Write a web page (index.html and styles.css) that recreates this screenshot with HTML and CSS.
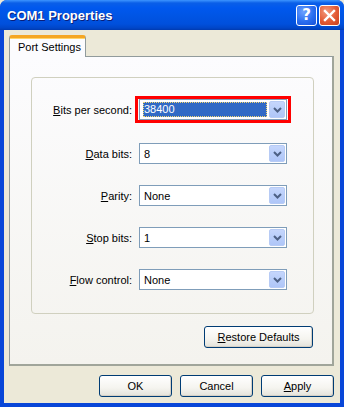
FILE: index.html
```html
<!DOCTYPE html>
<html>
<head>
<meta charset="utf-8">
<link rel="stylesheet" href="styles.css">
</head>
<body>
<div class="window">
  <div class="titlebar">
    <span class="title">COM1 Properties</span>
    <div class="tbtns">
      <div class="tbtn help">?</div>
      <div class="tbtn close">
        <svg width="13" height="13" viewBox="0 0 13 13"><path d="M2 2 L11 11 M11 2 L2 11" stroke="#fff" stroke-width="2.4" stroke-linecap="square"/></svg>
      </div>
    </div>
  </div>
  <div class="client">
    <div class="tabs">
      <div class="tab">Port Settings</div>
    </div>
    <div class="panel">
      <div class="group">
        <div class="row first">
          <label class="lbl"><u>B</u>its per second:</label>
          <div class="combo focus">
            <span class="sel">38400</span>
            <span class="arrow"><svg width="9" height="6" viewBox="0 0 9 6"><path d="M1 1 L4.5 4.5 L8 1" fill="none" stroke="#4D6185" stroke-width="2"/></svg></span>
            <div class="redbox"></div>
          </div>
        </div>
        <div class="row">
          <label class="lbl"><u>D</u>ata bits:</label>
          <div class="combo"><span class="val">8</span><span class="arrow"><svg width="9" height="6" viewBox="0 0 9 6"><path d="M1 1 L4.5 4.5 L8 1" fill="none" stroke="#4D6185" stroke-width="2"/></svg></span></div>
        </div>
        <div class="row">
          <label class="lbl"><u>P</u>arity:</label>
          <div class="combo"><span class="val">None</span><span class="arrow"><svg width="9" height="6" viewBox="0 0 9 6"><path d="M1 1 L4.5 4.5 L8 1" fill="none" stroke="#4D6185" stroke-width="2"/></svg></span></div>
        </div>
        <div class="row">
          <label class="lbl"><u>S</u>top bits:</label>
          <div class="combo"><span class="val">1</span><span class="arrow"><svg width="9" height="6" viewBox="0 0 9 6"><path d="M1 1 L4.5 4.5 L8 1" fill="none" stroke="#4D6185" stroke-width="2"/></svg></span></div>
        </div>
        <div class="row">
          <label class="lbl"><u>F</u>low control:</label>
          <div class="combo"><span class="val">None</span><span class="arrow"><svg width="9" height="6" viewBox="0 0 9 6"><path d="M1 1 L4.5 4.5 L8 1" fill="none" stroke="#4D6185" stroke-width="2"/></svg></span></div>
        </div>
      </div>
      <div class="restore-row">
        <button class="btn restore"><u>R</u>estore Defaults</button>
      </div>
    </div>
    <div class="footer">
      <button class="btn">OK</button>
      <button class="btn">Cancel</button>
      <button class="btn"><u>A</u>pply</button>
    </div>
  </div>
</div>
</body>
</html>
```

FILE: styles.css
```css
* { box-sizing: border-box; }
html, body { margin: 0; padding: 0; }
body {
  width: 344px;
  height: 407px;
  background: #ECE9D8;
  font-family: "Liberation Sans", Arial, sans-serif;
  font-size: 11px;
  color: #000;
  overflow: hidden;
}
.window {
  width: 344px;
  height: 407px;
  display: flex;
  flex-direction: column;
  background: #0846D8;
  border-radius: 7px 7px 0 0;
  overflow: hidden;
}
.titlebar {
  height: 30px;
  flex: none;
  display: flex;
  align-items: center;
  justify-content: space-between;
  padding: 0 4px 0 7px;
  background: linear-gradient(to bottom, #3D95FF 0px, #0A5FE8 3px, #0058EE 8px, #0055E5 15px, #0050DC 24px, #0046C8 28px, #003AB0 30px);
}
.title {
  color: #fff;
  font-family: "Liberation Sans", Arial, sans-serif;
  font-weight: bold;
  font-size: 13px;
  text-shadow: 1px 1px 0 #0A1E78;
  margin-top: 1px;
}
.tbtns { display: flex; gap: 2px; margin-top: 1px; }
.tbtn {
  width: 21px;
  height: 21px;
  border: 1px solid #fff;
  border-radius: 3px;
  display: flex;
  align-items: center;
  justify-content: center;
}
.help {
  background: radial-gradient(circle at 35% 30%, #6DA2FF 0%, #2A6EF0 55%, #1650D8 100%);
  color: #fff;
  font-weight: bold;
  font-size: 15px;
  font-family: "DejaVu Sans", sans-serif;
  line-height: 1;
}
.close {
  background: radial-gradient(circle at 35% 30%, #F39A7E 0%, #E35A34 55%, #C8401E 100%);
}
.client {
  flex: 1;
  margin: 0 4px 4px 4px;
  background: #ECE9D8;
  padding: 5px 6px 0 5px;
  display: flex;
  flex-direction: column;
}
.tabs { display: flex; height: 21px; position: relative; z-index: 2; }
.tab {
  width: 77px;
  height: 22px;
  border: 1px solid #919B9C;
  border-bottom: none;
  border-top: 3px solid #F5A623;
  border-radius: 3px 3px 0 0;
  background: #FCFCFE;
  padding: 3px 0 0 8px;
  box-shadow: inset 0 1px 0 #FFD46A;
}
.panel {
  height: 310px;
  border: 1px solid #919B9C;
  border-right: 2px solid #A0A59A;
  border-bottom: 2px solid #A0A59A;
  background: linear-gradient(to bottom, #FCFCFE 0%, #F4F3EE 100%);
  padding: 20px 18px 0 21px;
  display: flex;
  flex-direction: column;
}
.group {
  height: 237px;
  border: 1px solid #D0D0BF;
  border-radius: 4px;
  padding: 21px 0 0 0;
  display: flex;
  flex-direction: column;
  gap: 21px;
}
.row {
  display: flex;
  align-items: center;
  height: 21px;
}
.row.first { margin-bottom: 2px; }
.lbl {
  width: 101px;
  text-align: right;
  padding-right: 1px;
}
.combo {
  margin-left: 6px;
  width: 148px;
  height: 21px;
  border: 1px solid #7F9DB9;
  background: #fff;
  display: flex;
  align-items: center;
  padding: 1px;
  position: relative;
}
.val {
  flex: 1;
  padding-left: 3px;
  font-size: 11px;
}
.sel {
  flex: 1;
  height: 15px;
  margin: 0 2px 0 2px;
  background: #316AC5;
  color: #fff;
  outline: 1px dotted #F5D770;
  outline-offset: -1px;
  line-height: 15px;
  padding-left: 1px;
}
.arrow {
  width: 16px;
  height: 17px;
  border: 1px solid #B7CBF5;
  border-radius: 2px;
  background: linear-gradient(to bottom, #C5D6FC 0%, #B9CEFA 50%, #AFC6F8 100%);
  display: flex;
  align-items: center;
  justify-content: center;
  margin-left: auto;
}
.redbox {
  position: absolute;
  left: -5px;
  top: -4px;
  right: -5px;
  bottom: -4px;
  border: 3px solid #FF0000;
  pointer-events: none;
}
.restore-row {
  display: flex;
  justify-content: flex-end;
  padding-right: 1px;
  margin-top: 12px;
}
.btn {
  font-family: "Liberation Sans", Arial, sans-serif;
  font-size: 11px;
  color: #000;
  height: 22px;
  width: 73px;
  border: 1px solid #003C74;
  border-radius: 3px;
  background: linear-gradient(to bottom, #FFFFFF 0%, #F5F4EF 60%, #E3E2DA 100%);
  box-shadow: inset -1px -1px 0 #D6D0C5;
  padding: 0;
}
.restore { width: 109px; }
.footer {
  display: flex;
  justify-content: flex-end;
  gap: 8px;
  padding-top: 9px;
}
```
